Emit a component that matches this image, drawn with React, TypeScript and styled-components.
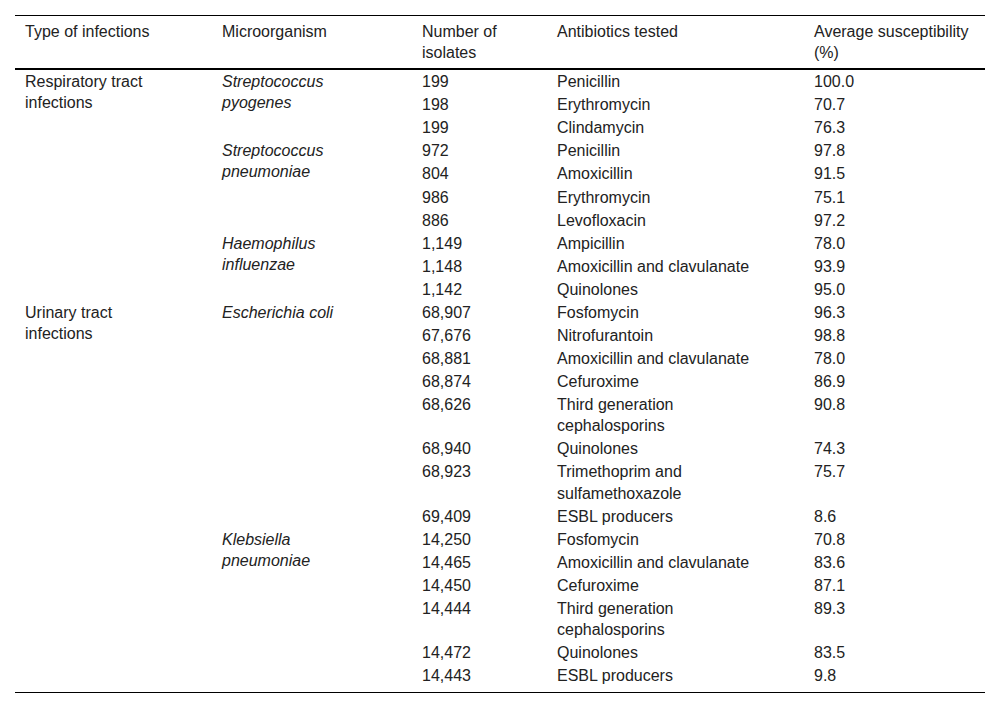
import React from 'react'
import styled, { createGlobalStyle } from 'styled-components'

const GlobalStyle = createGlobalStyle`
  body {
    margin: 0;
    background: #fff;
    font-family: "Liberation Sans", Arial, sans-serif;
  }
`

const Page = styled.div`
  padding: 15px;
`

const Table = styled.table`
  width: 970px;
  border-collapse: collapse;
  table-layout: fixed;
  font-size: 16px;
  line-height: 21.08px;
  color: #222;
`

const HeadRow = styled.tr`
  border-top: 1px solid #000;
  border-bottom: 2px solid #000;
`

const Th = styled.th`
  text-align: left;
  font-weight: normal;
  vertical-align: top;
  padding: 5px 10px 5px 10px;
  white-space: pre-line;
`

const Body = styled.tbody`
  border-bottom: 1px solid #000;
`

const Td = styled.td<{ $italic?: boolean; $last?: boolean }>`
  vertical-align: top;
  text-align: left;
  padding: 1px 10px ${({ $last }) => ($last ? '6px' : '1px')} 10px;
  white-space: pre-line;
  font-style: ${({ $italic }) => ($italic ? 'italic' : 'normal')};
`

type Test = [string, string, string]
interface Organism {
  name: string
  tests: Test[]
}
interface Infection {
  type: string
  organisms: Organism[]
}

const data: Infection[] = [
  {
    type: 'Respiratory tract\ninfections',
    organisms: [
      {
        name: 'Streptococcus\npyogenes',
        tests: [
          ['199', 'Penicillin', '100.0'],
          ['198', 'Erythromycin', '70.7'],
          ['199', 'Clindamycin', '76.3'],
        ],
      },
      {
        name: 'Streptococcus\npneumoniae',
        tests: [
          ['972', 'Penicillin', '97.8'],
          ['804', 'Amoxicillin', '91.5'],
          ['986', 'Erythromycin', '75.1'],
          ['886', 'Levofloxacin', '97.2'],
        ],
      },
      {
        name: 'Haemophilus\ninfluenzae',
        tests: [
          ['1,149', 'Ampicillin', '78.0'],
          ['1,148', 'Amoxicillin and clavulanate', '93.9'],
          ['1,142', 'Quinolones', '95.0'],
        ],
      },
    ],
  },
  {
    type: 'Urinary tract\ninfections',
    organisms: [
      {
        name: 'Escherichia coli',
        tests: [
          ['68,907', 'Fosfomycin', '96.3'],
          ['67,676', 'Nitrofurantoin', '98.8'],
          ['68,881', 'Amoxicillin and clavulanate', '78.0'],
          ['68,874', 'Cefuroxime', '86.9'],
          ['68,626', 'Third generation\ncephalosporins', '90.8'],
          ['68,940', 'Quinolones', '74.3'],
          ['68,923', 'Trimethoprim and\nsulfamethoxazole', '75.7'],
          ['69,409', 'ESBL producers', '8.6'],
        ],
      },
      {
        name: 'Klebsiella\npneumoniae',
        tests: [
          ['14,250', 'Fosfomycin', '70.8'],
          ['14,465', 'Amoxicillin and clavulanate', '83.6'],
          ['14,450', 'Cefuroxime', '87.1'],
          ['14,444', 'Third generation\ncephalosporins', '89.3'],
          ['14,472', 'Quinolones', '83.5'],
          ['14,443', 'ESBL producers', '9.8'],
        ],
      },
    ],
  },
]

const lastType = data.length - 1
const lastOrg = data[lastType].organisms.length - 1
const lastTest = data[lastType].organisms[lastOrg].tests.length - 1

const App = () => {
  return (
    <Page>
      <GlobalStyle />
      <Table>
        <colgroup>
          <col style={{ width: 197 }} />
          <col style={{ width: 200 }} />
          <col style={{ width: 135 }} />
          <col style={{ width: 257 }} />
          <col style={{ width: 181 }} />
        </colgroup>
        <thead>
          <HeadRow>
            <Th>Type of infections</Th>
            <Th>Microorganism</Th>
            <Th>{'Number of\nisolates'}</Th>
            <Th>Antibiotics tested</Th>
            <Th>{'Average susceptibility\n(%)'}</Th>
          </HeadRow>
        </thead>
        <Body>
          {data.map((inf, i) => {
            const total = inf.organisms.reduce((n, o) => n + o.tests.length, 0)
            return inf.organisms.map((org, j) =>
              org.tests.map((t, k) => {
                const last = i === lastType && j === lastOrg && k === lastTest
                return (
                  <tr key={`${i}-${j}-${k}`}>
                    {j === 0 && k === 0 && (
                      <Td rowSpan={total} $last={i === lastType}>
                        {inf.type}
                      </Td>
                    )}
                    {k === 0 && (
                      <Td rowSpan={org.tests.length} $italic $last={i === lastType && j === lastOrg}>
                        {org.name}
                      </Td>
                    )}
                    <Td $last={last}>{t[0]}</Td>
                    <Td $last={last}>{t[1]}</Td>
                    <Td $last={last}>{t[2]}</Td>
                  </tr>
                )
              })
            )
          })}
        </Body>
      </Table>
    </Page>
  )
}

export default App
